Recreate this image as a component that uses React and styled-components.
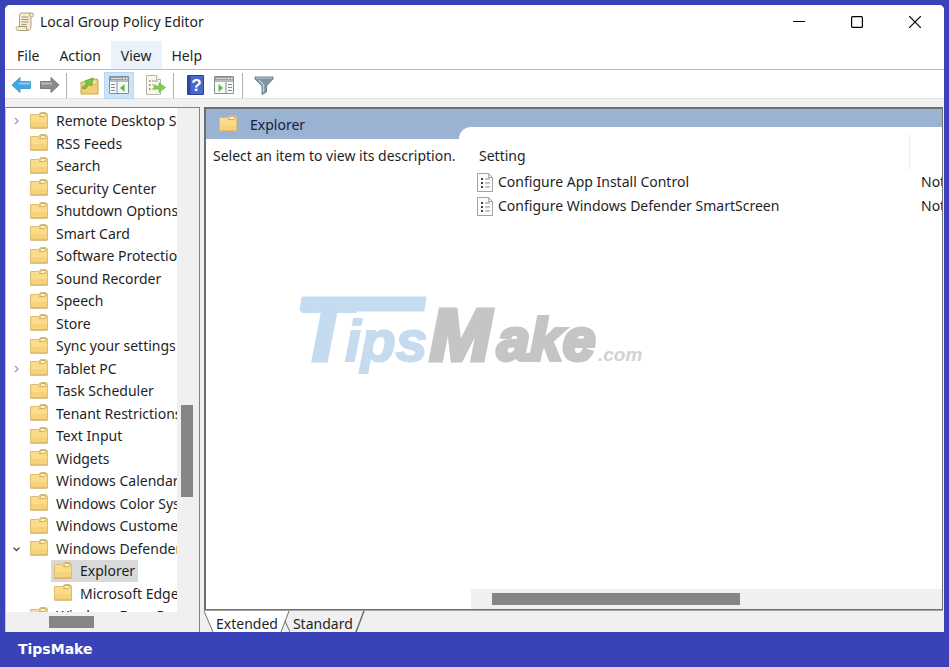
import React, { useState } from "react";
import styled, { createGlobalStyle } from "styled-components";

const GlobalStyle = createGlobalStyle`
  * {
    box-sizing: border-box;
  }

  body {
    margin: 0;
    background: #3943b7;
    color: #1f1f1f;
    font-family: "Noto Sans", "Open Sans", sans-serif;
    font-size: 14px;
    line-height: 20px;
  }

  button {
    font: inherit;
    color: inherit;
    border: 0;
    padding: 0;
    background: none;
  }
`;

const Page = styled.div`
  display: flex;
  flex-direction: column;
  height: 100vh;
  padding: 5px 5px 0;
`;

const Window = styled.main`
  flex: 1;
  min-height: 0;
  display: flex;
  flex-direction: column;
  background: #f0f0f0;
  border-radius: 5px 5px 0 0;
  overflow: hidden;
`;

const TitleBar = styled.header`
  display: flex;
  align-items: center;
  height: 36px;
  padding: 0 0 2px 10px;
  background: white;
`;

const Title = styled.h1`
  flex: 1;
  margin: 0 0 0 5px;
  font-size: 14px;
  font-weight: 400;
`;

const CaptionButton = styled.button`
  display: flex;
  align-items: center;
  justify-content: center;
  width: 58px;
  height: 34px;
`;

const MenuBar = styled.nav`
  display: flex;
  height: 28px;
  padding-left: 2px;
  background: white;
`;

const MenuButton = styled.button`
  padding: 2px 10px 0;
  background: ${({ $active }) => ($active ? "#eaf3fc" : "transparent")};
`;

const ToolBar = styled.div`
  display: flex;
  align-items: center;
  height: 30px;
  padding: 2px 0 0 2px;
  background: white;
  border-top: 1px solid #bdbdbd;
  border-bottom: 1px solid #e4e4e4;
`;

const ToolButton = styled.button`
  display: flex;
  align-items: center;
  justify-content: center;
  width: ${({ $narrow }) => ($narrow ? 28 : 30)}px;
  height: 27px;
  border: 1px solid ${({ $active }) => ($active ? "#b5d8f5" : "transparent")};
  background: ${({ $active }) => ($active ? "#cce4f7" : "transparent")};
`;

const ExportButton = styled(ToolButton)`
  margin-left: 6px;
`;

const Separator = styled.span`
  width: 1px;
  height: 25px;
  margin: 0 7px 0 3px;
  background: #b4b4b4;
`;

const Panes = styled.div`
  flex: 1;
  min-height: 0;
  display: flex;
  gap: 4px;
  padding: 8px 1px 0 0;
`;

const TreePane = styled.section`
  display: flex;
  flex-direction: column;
  width: 195px;
  border: 1px solid #828282;
  border-width: 1px 1px 0;
  border-left-color: #c8c8c8;
`;

const TreeBody = styled.div`
  flex: 1;
  min-height: 0;
  display: flex;
`;

const Tree = styled.ul`
  flex: 1;
  min-width: 0;
  margin: 0;
  padding: 2px 0 0;
  list-style: none;
  overflow: hidden;
  background: white;
`;

const TreeItem = styled.li`
  display: flex;
  align-items: center;
  height: 22px;
  padding-left: ${({ $depth }) => $depth * 24}px;
  white-space: nowrap;

  &:nth-child(even) {
    height: 23px;
  }
`;

const Expander = styled.span`
  display: flex;
  justify-content: center;
  flex: none;
  width: 21px;
`;

const TreeLabel = styled.button`
  display: flex;
  align-items: center;
  gap: 8px;
  height: 100%;
  padding: 0 3px;
  white-space: nowrap;
  background: ${({ $selected }) => ($selected ? "#d9d9d9" : "transparent")};
`;

const VerticalTrack = styled.div`
  display: flex;
  flex-direction: column;
  width: 22px;
  padding-left: 4px;
  background: #f0f0f0;
`;

const VerticalThumb = styled.div`
  width: 12px;
  height: 92px;
  margin-top: 297px;
  background: #858585;
`;

const HorizontalTrack = styled.div`
  display: flex;
  align-items: center;
  height: 20px;
  padding-left: ${({ $inset }) => $inset}px;
  background: #f0f0f0;
`;

const HorizontalThumb = styled.div`
  width: ${({ $width }) => $width};
  height: 12px;
  background: #858585;
`;

const ResultPane = styled.section`
  flex: 1;
  min-width: 0;
  display: flex;
  flex-direction: column;
`;

const ResultFrame = styled.div`
  position: relative;
  flex: 1;
  min-height: 0;
  display: flex;
  border: 1px solid #6e6e6e;
  border-width: 2px 1px 1px 2px;
  background: #9ab3d3;
`;

const Description = styled.div`
  display: flex;
  flex-direction: column;
  width: 253px;
`;

const DescriptionTitle = styled.h2`
  display: flex;
  align-items: center;
  gap: 13px;
  height: 30px;
  margin: 0;
  padding: 1px 0 0 13px;
  color: #14213f;
  font-size: 14px;
  font-weight: 400;
`;

const DescriptionText = styled.p`
  flex: 1;
  margin: 0;
  padding: 7px 0 0 7px;
  white-space: nowrap;
  background: white;
`;

const Settings = styled.div`
  flex: 1;
  min-width: 0;
  display: flex;
  flex-direction: column;
  margin-top: 18px;
  padding-left: 12px;
  border-radius: 12px 0 0 0;
  background: white;
`;

const TableArea = styled.div`
  flex: 1;
  padding: 7px 0 0 6px;
  overflow: hidden;
`;

const SettingsTable = styled.table`
  table-layout: fixed;
  width: 560px;
  border-collapse: collapse;
  white-space: nowrap;

  th {
    height: 36px;
    padding: 8px 0 0 2px;
    text-align: left;
    font-weight: 400;
  }

  th:first-child {
    width: 432px;
    border-right: 1px solid #ececec;
  }

  td {
    height: 24px;
    padding: 0;
  }

  td + td {
    padding-left: 12px;
  }
`;

const SettingName = styled.span`
  display: flex;
  align-items: center;
  gap: 5px;
`;

const Watermark = styled.svg`
  position: absolute;
  left: 90px;
  top: 178px;
  font-family: "Liberation Sans", Arial, sans-serif;
  font-weight: 700;
  font-style: italic;
  pointer-events: none;
`;

const TabStrip = styled.div`
  display: flex;
  height: 22px;
  border-top: 1px solid #a5a5a5;
`;

const Tab = styled.button`
  height: 24px;
  padding: 1px 2px 0 3px;
  background: ${({ $active }) => ($active ? "white" : "transparent")};
`;

const Footer = styled.footer`
  height: 35px;
  padding: 7px 13px;
  color: white;
  font-family: "DejaVu Sans", sans-serif;
  font-size: 14px;
  font-weight: 700;
`;

const FolderIcon = () => (
  <svg width="18" height="19" viewBox="0 0 18 19" aria-hidden="true">
    <path d="M.5 2.500H8.500l2-2h5.500l1.500 1.500v14H.5z" fill="#f8d681" stroke="#dcbc72" />
    <path d="M1 3h7.500l1 2.500h7.500V15.500H1z" fill="#fbdc8a" />
    <path d="M9.500 4.500l1.500-3h4.500l.5 1.500-2 1.500z" fill="#fff3cd" stroke="#b99a55" strokeWidth=".7" />
    <path d="M1 10h16v5.500H1z" fill="#f8d27a" />
    <path d="M.5 16h17" stroke="#c9a860" />
  </svg>
);

const ScrollIcon = () => (
  <svg width="20" height="20" viewBox="0 0 20 20" aria-hidden="true">
    <path d="M4.500 3Q4.500 1 7 1h9.500Q18.500 1 18.500 3t-2 2H16v10q0 3-3 3.500H3Q1 18 1 16.500T3 14.500h1.500z" fill="#f5ecd2" stroke="#b3a47e" />
    <path d="M3 14.500h8.500q-1 2 1 4M16 5q-2-1-1-4" fill="none" stroke="#a2967a" />
    <path d="M6.500 5h7M6.500 7.500h7M6.500 10h7M6.500 12.500h5" stroke="#9a9589" />
  </svg>
);

const ArrowIcon = ({ flip, fill, stroke }) => (
  <svg width="21" height="18" viewBox="0 0 21 18" aria-hidden="true">
    <path
      d="M1 9l8-7.500v4h10.500v7H9v4z"
      fill={fill}
      stroke={stroke}
      transform={flip ? "matrix(-1 0 0 1 21 0)" : undefined}
    />
    <path d={flip ? "M2 7.500h11" : "M8 7.500h11"} stroke="white" strokeOpacity=".4" strokeWidth="2" />
  </svg>
);

const UpFolderIcon = () => (
  <svg width="19" height="19" viewBox="0 0 19 19" aria-hidden="true">
    <path d="M1 6h6l3-3h7l1 1v14H1z" fill="#f5cd75" stroke="#d0a44e" />
    <path d="M11 4h6v4h-8z" fill="#f9e2a5" stroke="#c9a766" strokeWidth=".6" />
    <path d="M2 12l5-5-2.500-2L13 2l-1.500 8-2-1.500L5 13z" fill="#73c945" stroke="#4f9f2d" strokeWidth=".7" />
  </svg>
);

const PanelIcon = ({ right }) => (
  <svg width="20" height="18" viewBox="0 0 20 18" aria-hidden="true">
    <path d="M.5.500h19v17H.5z" fill="#f7f8f8" stroke="#868e95" />
    <path d="M1 1h18v5H1z" fill="#949da5" />
    <path d="M2 2.500h11M1 5h18" stroke="#d5dade" />
    <path d="M14 2.500h1.500M17 2.500h1.500" stroke="white" strokeWidth="1.500" />
    <path d={right ? "M12 6v11" : "M8 6v11"} stroke="#868e95" />
    <path
      d={right ? "M14 8.500h4M14 11.500h4M14 14.500h4" : "M2 8.500h4M2 11.500h4M2 14.500h4"}
      stroke="#858d94"
      strokeWidth="1.200"
    />
    <path d={right ? "M4.500 8l4.500 4-4.500 4z" : "M15.500 8L11 12l4.500 4z"} fill="#62b93b" />
  </svg>
);

const ExportIcon = () => (
  <svg width="21" height="20" viewBox="0 0 21 20" aria-hidden="true">
    <path d="M1.500.500h10l4 4v15h-14z" fill="#fbf8ea" stroke="#b4b4aa" />
    <path d="M11.500.500v4h4" fill="white" stroke="#b4b4aa" />
    <path d="M4 6h1.500M4 10h1.500M4 14h1.500" stroke="#777" strokeWidth="1.500" />
    <path d="M7 6h6M7 10h4M7 14h4" stroke="#9a9a96" />
    <path d="M9 11h5V7.500l6.500 5-6.500 5V14H9z" fill="#7bd04e" stroke="#5fb838" strokeWidth=".6" />
  </svg>
);

const HelpIcon = () => (
  <svg width="17" height="20" viewBox="0 0 17 20" aria-hidden="true">
    <path d="M.5.500h16v19H.5z" fill="#4a67cc" stroke="#2d4297" />
    <path d="M1 1h2.500v18H1z" fill="#32479f" />
    <text x="9.500" y="16" textAnchor="middle" fill="white" fontFamily="Liberation Sans, sans-serif" fontWeight="700" fontSize="17">
      ?
    </text>
  </svg>
);

const FilterIcon = () => (
  <svg width="20" height="19" viewBox="0 0 20 19" aria-hidden="true">
    <path d="M1 1h18v2l-6.500 7v6L8 18.500V10L1 3z" fill="#7d95a5" stroke="#71868f" />
    <path d="M2 2h16" stroke="#b6c6d1" />
    <path d="M5 4l4.500 5v7" fill="none" stroke="#bccbd5" strokeWidth="1.500" />
  </svg>
);

const PolicyIcon = () => (
  <svg width="16" height="19" viewBox="0 0 16 19" aria-hidden="true">
    <path d="M.5.500h11l4 4v14H.5z" fill="#fcfcfc" stroke="#a3a3a3" />
    <path d="M11.500.500v4h4" fill="none" stroke="#a3a3a3" />
    <path d="M4 6h2M4 10h2M4 14h2" stroke="#454545" strokeWidth="2" />
    <path d="M8 6h5M8 10h5M8 14h5" stroke="#8f8f8f" />
  </svg>
);

const Chevron = ({ open }) => (
  <svg width="8" height="8" viewBox="0 0 8 8" aria-hidden="true">
    <path
      d={open ? "M.5 2.500l3 3 3-3" : "M2 1l3 3-3 3"}
      fill="none"
      stroke={open ? "#4a4a4a" : "#9a9ab8"}
      strokeWidth="1.300"
    />
  </svg>
);

const folders = [
  { name: "Remote Desktop Services", state: "closed" },
  { name: "RSS Feeds" },
  { name: "Search" },
  { name: "Security Center" },
  { name: "Shutdown Options" },
  { name: "Smart Card" },
  { name: "Software Protection Platform" },
  { name: "Sound Recorder" },
  { name: "Speech" },
  { name: "Store" },
  { name: "Sync your settings" },
  { name: "Tablet PC", state: "closed" },
  { name: "Task Scheduler" },
  { name: "Tenant Restrictions" },
  { name: "Text Input" },
  { name: "Widgets" },
  { name: "Windows Calendar" },
  { name: "Windows Color System" },
  { name: "Windows Customer Experience" },
  { name: "Windows Defender SmartScreen", state: "open" },
  { name: "Explorer", depth: 1 },
  { name: "Microsoft Edge", depth: 1 },
  { name: "Windows Error Reporting" },
];

const settings = [
  "Configure App Install Control",
  "Configure Windows Defender SmartScreen",
];

const App = () => {
  const [selected, setSelected] = useState("Explorer");
  const [tab, setTab] = useState("Extended");

  return (
    <>
      <GlobalStyle />
      <Page>
        <Window>
          <TitleBar>
            <ScrollIcon />
            <Title>Local Group Policy Editor</Title>
            <CaptionButton aria-label="Minimize">
              <svg width="12" height="12" viewBox="0 0 12 12">
                <path d="M0 5.500h12" stroke="black" />
              </svg>
            </CaptionButton>
            <CaptionButton aria-label="Maximize">
              <svg width="12" height="12" viewBox="0 0 12 12">
                <rect x=".6" y=".6" width="10.800" height="10.800" rx="1" fill="none" stroke="black" strokeWidth="1.200" />
              </svg>
            </CaptionButton>
            <CaptionButton aria-label="Close">
              <svg width="12" height="12" viewBox="0 0 12 12">
                <path d="M0 0l12 12M12 0L0 12" stroke="black" strokeWidth="1.200" />
              </svg>
            </CaptionButton>
          </TitleBar>

          <MenuBar>
            {["File", "Action", "View", "Help"].map((name) => (
              <MenuButton key={name} $active={name === "View"}>
                {name}
              </MenuButton>
            ))}
          </MenuBar>

          <ToolBar>
            <ToolButton $narrow aria-label="Back">
              <ArrowIcon fill="#3fa9e5" stroke="#4b9cc9" />
            </ToolButton>
            <ToolButton $narrow aria-label="Forward">
              <ArrowIcon flip fill="#8c8c8c" stroke="#7b7b7b" />
            </ToolButton>
            <Separator />
            <ToolButton aria-label="Up one level">
              <UpFolderIcon />
            </ToolButton>
            <ToolButton $active aria-label="Show or hide console tree">
              <PanelIcon />
            </ToolButton>
            <ExportButton aria-label="Export list">
              <ExportIcon />
            </ExportButton>
            <Separator />
            <ToolButton $narrow aria-label="Help topics">
              <HelpIcon />
            </ToolButton>
            <ToolButton aria-label="Show or hide action pane">
              <PanelIcon right />
            </ToolButton>
            <Separator />
            <ToolButton $narrow aria-label="Filter">
              <FilterIcon />
            </ToolButton>
          </ToolBar>

          <Panes>
            <TreePane>
              <TreeBody>
                <Tree>
                  {folders.map(({ name, state, depth = 0 }) => (
                    <TreeItem key={name} $depth={depth}>
                      <Expander>{state && <Chevron open={state === "open"} />}</Expander>
                      <TreeLabel $selected={selected === name} onClick={() => setSelected(name)}>
                        <FolderIcon />
                        {name}
                      </TreeLabel>
                    </TreeItem>
                  ))}
                </Tree>
                <VerticalTrack>
                  <VerticalThumb />
                </VerticalTrack>
              </TreeBody>
              <HorizontalTrack $inset={43}>
                <HorizontalThumb $width="45px" />
              </HorizontalTrack>
            </TreePane>

            <ResultPane>
              <ResultFrame>
                <Description>
                  <DescriptionTitle>
                    <FolderIcon />
                    Explorer
                  </DescriptionTitle>
                  <DescriptionText>Select an item to view its description.</DescriptionText>
                </Description>
                <Settings>
                  <TableArea>
                    <SettingsTable>
                      <thead>
                        <tr>
                          <th>Setting</th>
                          <th />
                        </tr>
                      </thead>
                      <tbody>
                        {settings.map((name) => (
                          <tr key={name}>
                            <td>
                              <SettingName>
                                <PolicyIcon />
                                {name}
                              </SettingName>
                            </td>
                            <td>Not configured</td>
                          </tr>
                        ))}
                      </tbody>
                    </SettingsTable>
                  </TableArea>
                  <HorizontalTrack $inset={21}>
                    <HorizontalThumb $width="55%" />
                  </HorizontalTrack>
                </Settings>
                <Watermark width="360" height="90" viewBox="0 0 360 90">
                  <g fill="#c5dbef" stroke="#c5dbef">
                    <path d="M6 10h124l-2 14H4z" />
                    <text x="2" y="73" fontSize="86" strokeWidth="4">T</text>
                    <text x="49" y="74" fontSize="57" strokeWidth="2">ips</text>
                  </g>
                  <g fill="#c5c5c5" stroke="#c5c5c5">
                    <text x="134" y="73" fontSize="73" strokeWidth="5">M</text>
                    <text x="201" y="73" fontSize="59" strokeWidth="4">ake</text>
                    <text x="302" y="74" fontSize="19" fill="#d2d2d2" strokeWidth="0">.com</text>
                  </g>
                </Watermark>
              </ResultFrame>
              <TabStrip>
                <svg width="9" height="22" viewBox="0 0 9 22" aria-hidden="true">
                  <path d="M0 0h9v22z" fill="white" />
                  <path d="M0 0l9 21" stroke="#6e6e6e" />
                </svg>
                <Tab $active={tab === "Extended"} onClick={() => setTab("Extended")}>
                  Extended
                </Tab>
                <svg width="10" height="22" viewBox="0 0 10 22" aria-hidden="true">
                  <path d="M0 0h9L1 22H0z" fill="white" />
                  <path d="M9 0L1 21M5 10l5 11" stroke="#6e6e6e" />
                </svg>
                <Tab $active={tab === "Standard"} onClick={() => setTab("Standard")}>
                  Standard
                </Tab>
                <svg width="10" height="22" viewBox="0 0 10 22" aria-hidden="true">
                  <path d="M9 0L1 21" stroke="#6e6e6e" strokeWidth="1.500" />
                </svg>
              </TabStrip>
            </ResultPane>
          </Panes>
        </Window>
        <Footer>TipsMake</Footer>
      </Page>
    </>
  );
};

export default App;
